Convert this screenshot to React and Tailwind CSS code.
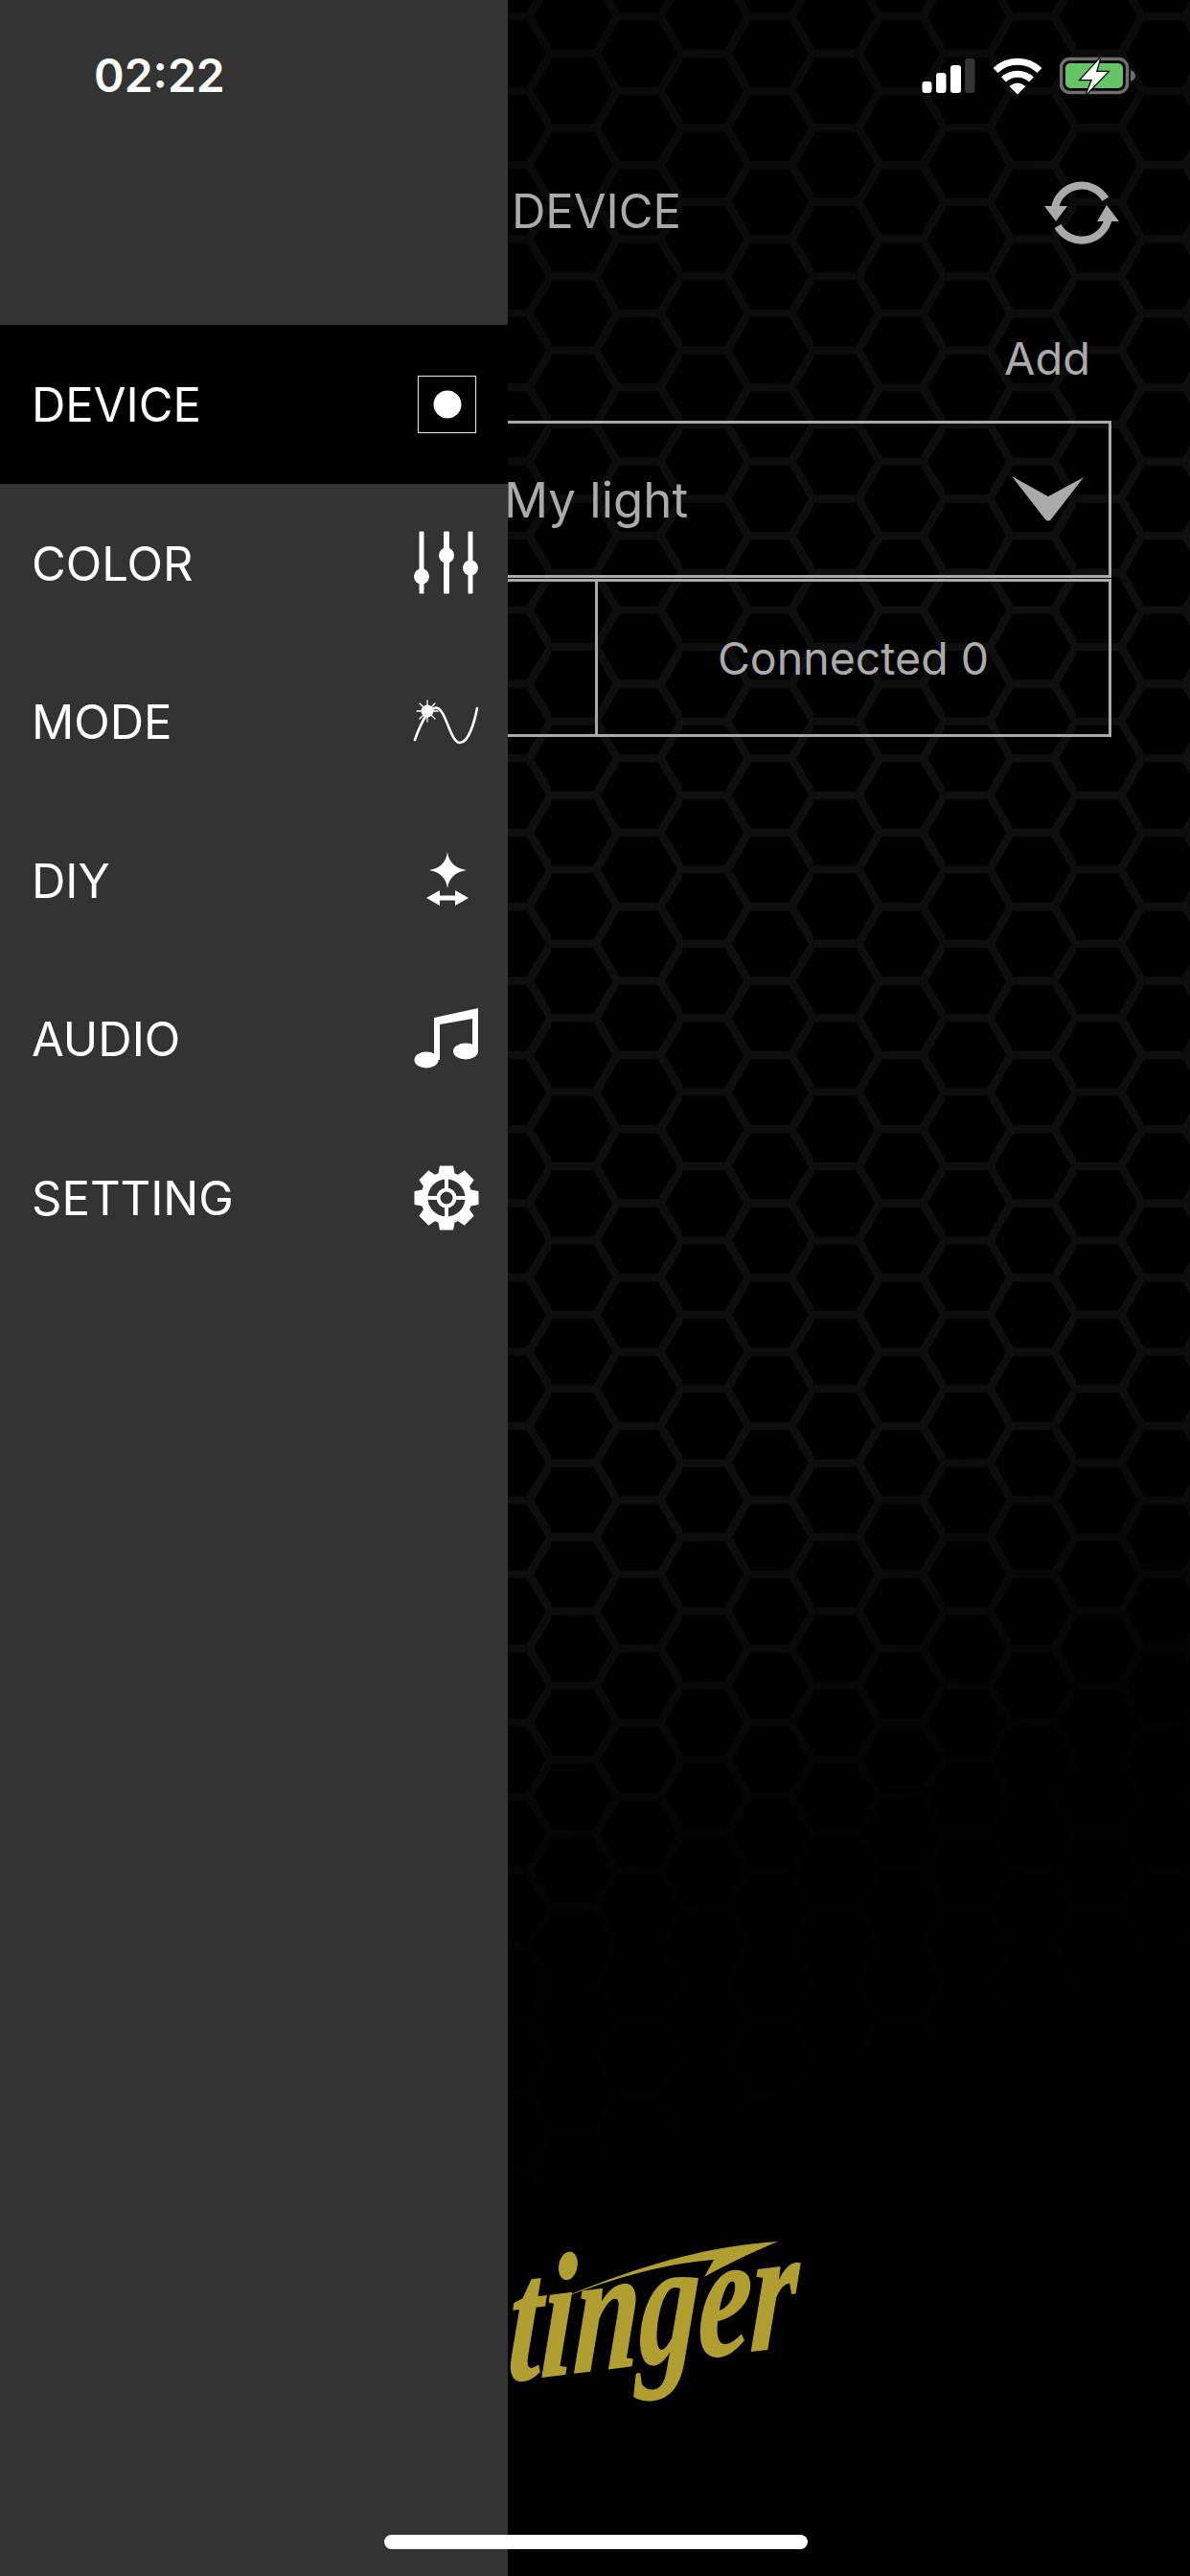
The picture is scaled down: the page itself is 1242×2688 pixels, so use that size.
const FONT = "font-['Inter','Noto_Sans',sans-serif]";

const menu = [
  { label: 'DEVICE', icon: DeviceIcon, active: true },
  { label: 'COLOR', icon: SlidersIcon },
  { label: 'MODE', icon: WaveIcon },
  { label: 'DIY', icon: StarIcon },
  { label: 'AUDIO', icon: MusicIcon },
  { label: 'SETTING', icon: GearIcon },
];

function DeviceIcon() {
  return (
    <svg width="70" height="70" viewBox="0 0 70 70">
      <rect x="5.5" y="5.5" width="60" height="59" fill="none" stroke="#d8d8d8" strokeWidth="1.2" />
      <circle cx="36" cy="35" r="14.5" fill="#fff" />
    </svg>
  );
}

function SlidersIcon() {
  return (
    <svg width="70" height="70" viewBox="0 0 70 70" fill="#fff">
      <rect x="6.5" y="2.5" width="5" height="65" rx="1" />
      <rect x="32" y="2.5" width="6" height="65" rx="1" />
      <rect x="57.5" y="2.5" width="5" height="65" rx="1" />
      <circle cx="9" cy="49.5" r="8" />
      <circle cx="35" cy="27.5" r="8" />
      <circle cx="60" cy="40.5" r="8" />
    </svg>
  );
}

function WaveIcon() {
  return (
    <svg width="70" height="70" viewBox="0 0 70 70" fill="none" stroke="#fff" strokeLinecap="round">
      <path d="M2 54C7 40 13 25 22 21C34 16 38 57 49 57C58 57 64 36 67 21" strokeWidth="2.6" />
      <circle cx="15" cy="24" r="6.5" fill="#fff" stroke="none" />
      <path d="M15 13V35M4 24H26M7 16L23 32M7 32L23 16" strokeWidth="1.3" />
    </svg>
  );
}

function StarIcon() {
  return (
    <svg width="70" height="70" viewBox="0 0 70 70" fill="#fff">
      <path d="M36 5Q38 21 56 24Q38 27 36 43Q34 27 17 24Q34 21 36 5Z" />
      <path d="M14 53L28 45V50.5H44V45L58 53L44 61V55.5H28V61Z" />
    </svg>
  );
}

function MusicIcon() {
  return (
    <svg width="70" height="70" viewBox="0 0 70 70" fill="#fff">
      <path d="M22 13L68 3V48H62V14L28 20V57H22Z" />
      <ellipse cx="14" cy="57" rx="12.5" ry="8.5" />
      <ellipse cx="55" cy="48" rx="13" ry="8.5" />
    </svg>
  );
}

function GearIcon() {
  return (
    <svg width="70" height="70" viewBox="0 0 70 70" fill="#fff">
      <circle cx="35" cy="35" r="27" />
      {[0, 45, 90, 135, 180, 225, 270, 315].map((a) => (
        <path key={a} d="M28 1.5H42L44 12H26Z" transform={`rotate(${a} 35 35)`} />
      ))}
      <circle cx="35" cy="35" r="19.5" fill="#333333" />
      <rect x="33" y="14" width="4" height="42" />
      <rect x="14" y="33" width="42" height="4" />
      <circle cx="35" cy="35" r="10.5" />
      <circle cx="35" cy="35" r="6.5" fill="#333333" />
    </svg>
  );
}

function SyncIcon() {
  return (
    <svg width="80" height="66" viewBox="0 0 80 66" fill="#aaaaaa">
      <path d="M64.7 18.8A28.5 28.5 0 0 0 12 28M15 47A28.5 28.5 0 0 0 68 38" fill="none" stroke="#aaaaaa" strokeWidth="8" />
      <path d="M1 26H25L13 42Z" />
      <path d="M66 25L79 42H56Z" />
    </svg>
  );
}

function Chevron() {
  return (
    <svg width="76" height="48" viewBox="0 0 76 48" fill="#aaaaaa">
      <path d="M0 0L38 21L75 1L41 45Q38 48 35 45Z" />
    </svg>
  );
}

function StatusIcons() {
  return (
    <div className="flex items-center gap-[18px] pt-[2px]">
      <svg width="56" height="38" viewBox="0 0 56 38">
        <rect x="0.5" y="25" width="10" height="12" rx="3" fill="#fff" />
        <rect x="15" y="16" width="10.5" height="21" rx="3" fill="#fff" />
        <rect x="30" y="8" width="11" height="29" rx="3" fill="#fff" />
        <rect x="45" y="1" width="10.5" height="36" rx="3" fill="#333333" />
      </svg>
      <svg width="52" height="40" viewBox="0 0 52 40" fill="none" stroke="#fff" strokeWidth="7">
        <path d="M3 14.5A33 33 0 0 1 49 14.5" />
        <path d="M11.5 24A21 21 0 0 1 40.5 24" />
        <path d="M17.5 31Q26 24 34.5 31L26 39.5Z" fill="#fff" stroke="none" />
      </svg>
      <svg width="80" height="40" viewBox="0 0 80 40">
        <rect x="1.5" y="2.5" width="69" height="35" rx="9" fill="none" stroke="#6e6e6e" strokeWidth="3.5" />
        <rect x="6" y="7" width="60" height="26" rx="5" fill="#65c466" />
        <path d="M74 14Q79 16 79 20Q79 24 74 26Z" fill="#6e6e6e" />
        <path d="M42 2L22 24H34L28 39L50 16H38Z" fill="#fff" stroke="#000" strokeWidth="2.5" paintOrder="stroke" />
      </svg>
    </div>
  );
}

// honeycomb: faint at the top, fades out diagonally towards the lower right
function Honeycomb() {
  return (
    <svg className="absolute inset-0" width="1242" height="2688">
      <defs>
        <pattern id="hex" width="137" height="77.4" patternUnits="userSpaceOnUse" patternTransform="translate(575 830)">
          <path
            d="M-5 0H47L69 38.7L47 77.4H-5M69 38.7H114L137 0H142M114 38.7L137 77.4H142"
            fill="none"
            stroke="#0f0f0f"
            strokeWidth="8.5"
          />
        </pattern>
        <linearGradient id="fade" gradientUnits="userSpaceOnUse" x1="400" y1="0" x2="1217" y2="2150">
          <stop offset="0.05" stopColor="#fff" stopOpacity="0.6" />
          <stop offset="0.35" stopColor="#fff" stopOpacity="1" />
          <stop offset="0.7" stopColor="#fff" stopOpacity="0.9" />
          <stop offset="0.86" stopColor="#fff" stopOpacity="0.1" />
          <stop offset="1" stopColor="#fff" stopOpacity="0" />
        </linearGradient>
        <mask id="hexfade" maskUnits="userSpaceOnUse" x="0" y="0" width="1242" height="2688">
          <rect width="1242" height="2688" fill="url(#fade)" />
        </mask>
      </defs>
      <rect width="1242" height="2688" fill="url(#hex)" mask="url(#hexfade)" />
    </svg>
  );
}

function Logo() {
  return (
    <div className="absolute left-[430px] top-[2310px] h-[240px] w-[440px]">
      <span className="absolute left-[33px] top-[32px] origin-left -rotate-[7deg] scale-x-[0.69] -skew-x-[14deg] font-['Liberation_Serif',serif] text-[180px] leading-none font-bold text-[#b09f30] italic [-webkit-text-stroke:2px_#b09f30]">
        Stinger
      </span>
      <svg className="absolute inset-0" width="440" height="240" viewBox="430 2310 440 240" fill="#b09f30">
        <path d="M570 2405C640 2375 720 2345 812 2339C790 2348 760 2362 735 2376L745 2358C690 2362 630 2380 570 2405Z" />
      </svg>
    </div>
  );
}

export default function App() {
  return (
    <div className={`relative flex h-[2688px] w-[1242px] overflow-hidden bg-black ${FONT}`}>
      <Honeycomb />
      <Logo />

      <aside className="relative flex h-full w-[530px] shrink-0 flex-col bg-[#333333] text-white">
        <div className="flex h-[156px] items-center pt-[2px] pl-[98px] text-[48px] font-semibold">02:22</div>
        <div className="h-[183px]" />
        {menu.map((item) => (
          <div
            key={item.label}
            className={`flex h-[165.6px] items-center justify-between pr-[29px] pl-[33px] text-[49px] ${item.active ? 'bg-black' : ''}`}
          >
            <span className="pt-[2px]">{item.label}</span>
            <item.icon />
          </div>
        ))}
      </aside>

      <main className="relative min-w-0 flex-1 overflow-hidden text-[#aaaaaa]">
        <div className="flex h-[156px] items-center justify-end pr-[56px]">
          <StatusIcons />
        </div>
        <div className="flex h-[132px] items-center justify-between pr-[73px] pl-[4px] text-[49px]">
          <span className="-mt-[2px]">DEVICE</span>
          <SyncIcon />
        </div>
        <div className="flex h-[151px] items-center justify-end pt-[22px] pr-[104px] text-[47px]">Add</div>
        <div className="mr-[82px] flex h-[164px] items-center justify-between border-y-[3px] border-r-[3px] border-[#aaaaaa] pr-[25px] text-[51px]">
          <span className="-ml-[4px] pt-[3px]">My light</span>
          <Chevron />
        </div>
        <div className="mt-[1px] mr-[82px] flex h-[165px] border-y-[3px] border-r-[3px] border-[#aaaaaa] text-[46.5px]">
          <div className="w-[94px] shrink-0 border-r-[3px] border-[#aaaaaa]" />
          <div className="flex flex-1 items-center justify-center pt-[3px]">Connected 0</div>
        </div>
      </main>

      <div className="absolute bottom-[28px] left-[401px] h-[15px] w-[442px] rounded-full bg-white" />
    </div>
  );
}
